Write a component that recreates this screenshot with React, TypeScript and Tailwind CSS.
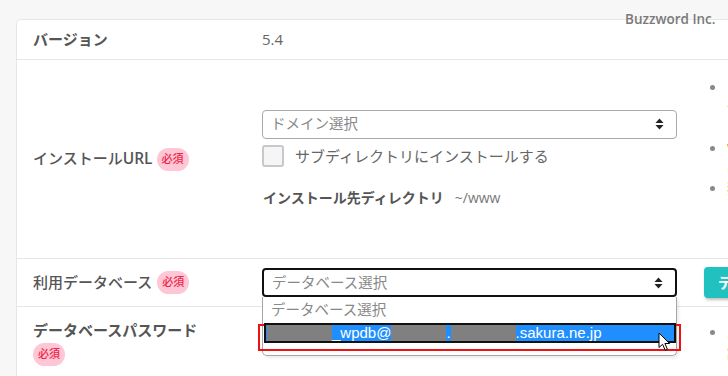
import { ReactNode } from 'react'

const jp = { fontFamily: '"Open Sans", "Noto Sans CJK JP", sans-serif' }
const arial = { fontFamily: '"Liberation Sans", "Noto Sans CJK JP", sans-serif' }

function Badge({ className = '' }: { className?: string }) {
  return (
    <span
      className={`inline-flex h-[23px] w-[32px] items-center justify-center rounded-full bg-[#ffc6d5] text-[11px] font-medium text-[#ec2448] ${className}`}
    >
      必須
    </span>
  )
}

function SortArrows() {
  return (
    <svg width="9" height="12" viewBox="0 0 9 12" className="shrink-0">
      <path d="M4.5 0.5 L8.5 5 H0.5 Z" fill="#222" />
      <path d="M4.5 11.5 L8.5 7 H0.5 Z" fill="#222" />
    </svg>
  )
}

function Select({ text, focused = false }: { text: string; focused?: boolean }) {
  return (
    <div
      className={`flex h-[29px] w-[415px] items-center justify-between rounded-[4px] bg-white pl-[8px] pr-[12px] text-[14.5px] text-[#888] ${
        focused ? 'border-2 border-[#111] pl-[7px]' : 'border border-[#a9a9a9]'
      }`}
    >
      <span>{text}</span>
      <SortArrows />
    </div>
  )
}

function Cursor() {
  return (
    <svg width="14" height="20" viewBox="0 0 14 20" className="absolute left-[392px] top-[7px]">
      <path
        d="M1 1 L1 15.5 L4.6 12.3 L7.2 18.2 L9.4 17.2 L6.9 11.5 L11.6 11.5 Z"
        fill="#fff"
        stroke="#000"
        strokeWidth="1"
        strokeLinejoin="round"
      />
    </svg>
  )
}

function Dropdown() {
  return (
    <div className="absolute left-0 top-[29px] z-10 h-[59px] w-[415px] rounded-b-[5px] border border-t-0 border-[#a6a6a6] bg-white shadow-[2px_2px_3px_rgba(0,0,0,0.08)]">
      <div className="flex h-[22px] items-center pl-[8px] pt-[3px] text-[14.5px] text-[#888]">データベース選択</div>
      <div className="relative">
        <div className="absolute left-[-5px] top-[1px] h-[27px] w-[423px] border-2 border-[#ee1111]" />
        <div
          className="relative ml-[1px] mt-[4px] flex h-[20px] w-[412px] items-stretch border-2 border-[#111] bg-[#1f8fff] text-[15px] leading-[16px] text-white"
          style={arial}
        >
          <span className="ml-[1px] w-[65px] bg-[#808080]" />
          <span className="flex items-center">_wpdb@</span>
          <span className="w-[55px] bg-[#808080]" />
          <span className="flex items-center">.</span>
          <span className="w-[65px] bg-[#808080]" />
          <span className="flex items-center">.sakura.ne.jp</span>
          <Cursor />
        </div>
      </div>
    </div>
  )
}

function Bullets({ items }: { items: string[][] }) {
  return (
    <ul className="flex flex-col">
      {items.map((lines, i) => (
        <li key={i} className="flex gap-[8px]">
          <span className="mt-[7px] h-[5px] w-[5px] shrink-0 rounded-full bg-[#888]" />
          <div className="flex flex-col gap-[2px] pl-[4px] text-[13px] leading-[19px]">
            {lines.map((l, j) => (
              <span key={j} className="whitespace-nowrap">
                {l}
              </span>
            ))}
          </div>
        </li>
      ))}
    </ul>
  )
}

function Row({
  label,
  children,
  className = '',
  last = false,
}: {
  label: ReactNode
  children: ReactNode
  className?: string
  last?: boolean
}) {
  return (
    <div className={`flex ${last ? '' : 'border-b border-[#e6e6e6]'} ${className}`}>
      <div className="w-[245px] shrink-0 pl-[16px] text-[15px] text-[#555]">{label}</div>
      {children}
    </div>
  )
}

export default function App() {
  return (
    <div className="relative h-[376px] w-[728px] overflow-hidden bg-[#f7f7f7]" style={jp}>
      <div className="absolute left-[625px] top-[10px] z-20 text-[13.5px] font-semibold leading-[18px] text-[#7a7a7a]">
        Buzzword Inc.
      </div>
      <div className="ml-[16px] mt-[19px] w-[800px] rounded-tl-[5px] border border-r-0 border-[#e6e6e6] bg-white">
        <Row label={<span className="font-bold">バージョン</span>} className="h-[40px] items-center">
          <span className="text-[15px] text-[#666]">5.4</span>
        </Row>

        <Row
          label={
            <div className="flex items-center gap-[4px]">
              <span className="font-medium">
                インストール<span className="text-[15.5px] font-semibold">URL</span>
              </span>
              <Badge />
            </div>
          }
          className="h-[199px] items-center"
        >
          <div className="flex w-[415px] shrink-0 flex-col">
            <Select text="ドメイン選択" />
            <label className="mt-[6px] flex items-center gap-[11px]">
              <span className="h-[22px] w-[22px] rounded-[3px] border-2 border-[#c8c8c8] bg-[#f5f5f8]" />
              <span className="text-[15px] text-[#666]">サブディレクトリにインストールする</span>
            </label>
            <div className="mt-[20px] flex items-center gap-[11px] pl-[1px] text-[14px] text-[#555]">
              <span className="font-bold">インストール先ディレクトリ</span>
              <span className="text-[#777]">~/www</span>
            </div>
          </div>
          <div className="ml-[33px] self-start pt-[18px] text-[#d9822b]">
            <Bullets
              items={[
                ['\u00a0', 'サブドメイン', 'を選択'],
                ['WordPress', 'の設定'],
                ['独自', 'ドメイン'],
              ]}
            />
          </div>
        </Row>

        <Row
          label={
            <div className="flex items-center gap-[5px]">
              <span className="font-medium">利用データベース</span>
              <Badge />
            </div>
          }
          className="h-[48px] items-center"
        >
          <div className="relative w-[415px] shrink-0">
            <Select text="データベース選択" focused />
            <Dropdown />
          </div>
          <button className="ml-[27px] h-[31px] shrink-0 whitespace-nowrap rounded-[4px] bg-[#21c1c0] px-[14px] text-[15px] font-bold text-white shadow-[1px_2px_3px_rgba(0,0,0,0.25)]">
            データベース作成
          </button>
        </Row>

        <Row
          last
          label={
            <div className="flex flex-col items-start gap-[1px] pt-[12px]">
              <span className="font-bold">データベースパスワード</span>
              <Badge />
            </div>
          }
          className="h-[80px] items-start"
        >
          <div className="w-[415px] shrink-0 pt-[10px]">
            <div className="h-[29px] w-[415px] rounded-[4px] border border-[#a9a9a9] bg-white" />
          </div>
          <div className="ml-[33px] pt-[16px] text-[#d9822b]">
            <Bullets items={[['パスワード', '設定']]} />
          </div>
        </Row>
      </div>
    </div>
  )
}
